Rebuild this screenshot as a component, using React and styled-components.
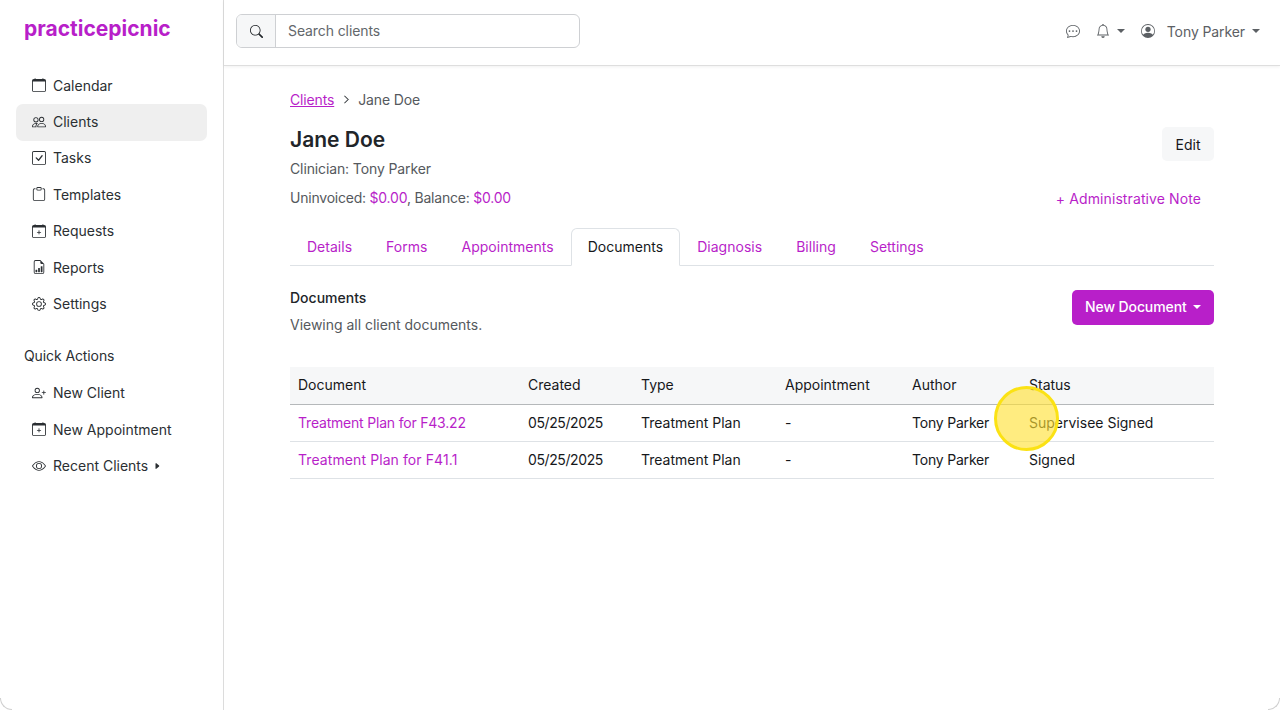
import React from "react";
import styled, { createGlobalStyle } from "styled-components";
import {
  BsCalendar, BsPeople, BsCheckSquare, BsClipboard, BsCalendarPlus,
  BsFileEarmarkBarGraph, BsGear, BsPersonPlus, BsEye, BsChatDots,
  BsBell, BsPersonCircle, BsSearch, BsCaretRightFill, BsChevronRight,
} from "react-icons/bs";

const purple = "#b81fc9";

const Global = createGlobalStyle`
  html, body { margin: 0; height: 100%; background: #fff; }
  body {
    font-family: Inter, "Noto Sans", "Liberation Sans", sans-serif;
    font-size: 14px;
    color: #212529;
    overflow: hidden;
  }
`;

const Page = styled.div`
  display: flex;
  width: 1280px;
  height: 710px;
`;

const Sidebar = styled.aside`
  flex: 0 0 224px;
  box-sizing: border-box;
  border-right: 1px solid #dcdcdc;
  padding: 0 16px;
`;

const Logo = styled.div`
  font-size: 21px;
  font-weight: 700;
  color: ${purple};
  height: 68px;
  line-height: 57px;
  padding-left: 8px;
`;

const NavList = styled.nav`
  display: flex;
  flex-direction: column;
`;

const NavItem = styled.a`
  display: flex;
  align-items: center;
  gap: 7px;
  box-sizing: border-box;
  height: 36.4px;
  padding: 0 0 2px 16px;
  border-radius: 7px;
  color: #2b2f33;
  background: ${(p) => (p.$active ? "#efefef" : "transparent")};
  svg { font-size: 14px; flex: none; }
`;

const SectionLabel = styled.div`
  padding: 23px 0 10px 8px;
  line-height: 20px;
  color: #2b2f33;
  letter-spacing: -0.1px;
`;

const Caret = styled(BsCaretRightFill)`
  && { font-size: 8px; margin-left: -2px; }
`;

const Main = styled.div`
  flex: 1;
  display: flex;
  flex-direction: column;
  min-width: 0;
`;

const Topbar = styled.header`
  flex: 0 0 66px;
  box-sizing: border-box;
  display: flex;
  align-items: center;
  justify-content: space-between;
  padding: 0 20px 3px 12px;
  border-bottom: 1px solid #dedede;
  box-shadow: 0 1px 3px rgba(0, 0, 0, 0.06);
`;

const Search = styled.div`
  display: flex;
  width: 344px;
  height: 34px;
  box-sizing: border-box;
  border: 1px solid #ced0d3;
  border-radius: 6px;
  overflow: hidden;
`;

const SearchIcon = styled.div`
  flex: 0 0 38px;
  display: flex;
  align-items: center;
  justify-content: center;
  background: #f6f7f8;
  border-right: 1px solid #ced0d3;
  color: #212529;
  font-size: 13px;
`;

const SearchText = styled.div`
  padding-left: 12px;
  line-height: 32px;
  color: #63676b;
  letter-spacing: -0.1px;
`;

const TopActions = styled.div`
  display: flex;
  align-items: center;
  color: #5c6064;
`;

const TopIcon = styled.span`
  display: flex;
  font-size: 14px;
  margin-left: ${(p) => p.$gap || 0}px;
`;

const TopName = styled.span`
  margin-left: 12px;
  letter-spacing: -0.1px;
`;

const DownCaret = styled.span`
  width: 0;
  height: 0;
  margin-left: ${(p) => p.$gap || 6}px;
  border-top: 4px solid currentColor;
  border-left: 4px solid transparent;
  border-right: 4px solid transparent;
`;

const Content = styled.main`
  padding: 23px 66px 0;
`;

const Crumbs = styled.div`
  display: flex;
  align-items: center;
  height: 20px;
  color: #55595d;
  letter-spacing: -0.15px;
  svg { font-size: 9px; margin: 0 7.5px; color: #404448; stroke: #404448; stroke-width: 1px; }
`;

const CrumbLink = styled.a`
  color: ${purple};
  text-decoration: underline;
`;

const ClientHead = styled.div`
  display: flex;
  justify-content: space-between;
  margin-top: 15px;
`;

const ClientName = styled.h1`
  margin: 0;
  padding-top: 1px;
  font-size: 21px;
  font-weight: 600;
  line-height: 30px;
  color: #212529;
`;

const Meta = styled.div`
  margin-top: ${(p) => p.$top}px;
  line-height: 20px;
  color: #55595d;
  letter-spacing: ${(p) => p.$spacing}px;
`;

const Money = styled.span`
  color: ${purple};
`;

const HeadActions = styled.div`
  display: flex;
  flex-direction: column;
  align-items: flex-end;
`;

const EditButton = styled.button`
  width: 52px;
  height: 34px;
  margin-top: 3px;
  padding: 0;
  border: 0;
  border-radius: 5px;
  background: #f6f7f8;
  color: #16181b;
  font: inherit;
`;

const NoteLink = styled.a`
  margin: 28px 13px 0 0;
  line-height: 20px;
  color: ${purple};
  letter-spacing: 0.1px;
`;

const Tabs = styled.div`
  display: flex;
  margin-top: 19px;
  height: 37px;
  border-bottom: 1px solid #dee2e6;
`;

const Tab = styled.a`
  box-sizing: border-box;
  height: 38px;
  padding: 0 16px;
  line-height: 36px;
  border: 1px solid ${(p) => (p.$active ? "#dee2e6" : "transparent")};
  border-bottom-color: ${(p) => (p.$active ? "#fff" : "transparent")};
  border-radius: 6px 6px 0 0;
  color: ${(p) => (p.$active ? "#16181b" : purple)};
  letter-spacing: 0.02px;
`;

const DocsHead = styled.div`
  display: flex;
  justify-content: space-between;
  align-items: flex-start;
  margin-top: 24px;
`;

const DocsTitle = styled.div`
  margin-top: -2px;
  line-height: 20px;
  font-weight: 500;
  color: #212529;
`;

const DocsText = styled.div`
  margin-top: 7px;
  line-height: 20px;
  color: #55595d;
  letter-spacing: -0.02px;
`;

const NewButton = styled.button`
  display: flex;
  align-items: center;
  height: 35px;
  width: 142px;
  padding: 0 13px 2px;
  border: 0;
  border-radius: 5px;
  background: ${purple};
  color: #fff;
  font: inherit;
  font-weight: 500;
  letter-spacing: -0.1px;
  white-space: nowrap;
`;

const Table = styled.table`
  width: 100%;
  margin-top: 32px;
  border-collapse: collapse;
  table-layout: fixed;
`;

const HeadRow = styled.tr`
  background: #f6f7f8;
  border-bottom: 1px solid #b5b8ba;
`;

const Row = styled.tr`
  border-bottom: 1px solid #dee2e6;
`;

const Th = styled.th`
  height: 37px;
  box-sizing: border-box;
  padding: 0 8px 2px;
  text-align: left;
  font-weight: 400;
  color: #16181b;
`;

const Td = styled.td`
  height: 37px;
  box-sizing: border-box;
  padding: 0 8px;
  color: #16181b;
  letter-spacing: ${(p) => p.$spacing || 0}px;
  white-space: nowrap;
`;

const DocLink = styled.a`
  color: ${purple};
`;

const Highlight = styled.div`
  position: absolute;
  left: 994px;
  top: 386px;
  width: 65px;
  height: 65px;
  box-sizing: border-box;
  border-radius: 50%;
  border: 3px solid #fbe214;
  background: rgba(255, 225, 50, 0.62);
`;

const WindowCorner = styled.div`
  position: absolute;
  bottom: 0;
  ${(p) => p.$side}: 0;
  width: 12px;
  height: 12px;
  box-sizing: border-box;
  border-bottom: 1px solid #cfcfcf;
  border-${(p) => p.$side}: 1px solid #cfcfcf;
  border-bottom-${(p) => p.$side}-radius: 12px;
`;

const mainNav = [
  [BsCalendar, "Calendar"],
  [BsPeople, "Clients", true],
  [BsCheckSquare, "Tasks"],
  [BsClipboard, "Templates"],
  [BsCalendarPlus, "Requests"],
  [BsFileEarmarkBarGraph, "Reports"],
  [BsGear, "Settings"],
];

const tabs = ["Details", "Forms", "Appointments", "Documents", "Diagnosis", "Billing", "Settings"];
const colWidths = [230, 113, 144, 127, 117, 193];

const rows = [
  { name: "Treatment Plan for F43.22", status: "Supervisee Signed", spacing: -0.2 },
  { name: "Treatment Plan for F41.1", status: "Signed", spacing: 0.09 },
];

export default function App() {
  return (
    <>
      <Global />
      <Page>
        <Sidebar>
          <Logo>practicepicnic</Logo>
          <NavList>
            {mainNav.map(([Icon, label, active]) => (
              <NavItem key={label} $active={active}>
                <Icon /> {label}
              </NavItem>
            ))}
          </NavList>
          <SectionLabel>Quick Actions</SectionLabel>
          <NavList>
            <NavItem><BsPersonPlus /> New Client</NavItem>
            <NavItem><BsCalendarPlus /> New Appointment</NavItem>
            <NavItem><BsEye /> Recent Clients <Caret /></NavItem>
          </NavList>
        </Sidebar>
        <Main>
          <Topbar>
            <Search>
              <SearchIcon><BsSearch /></SearchIcon>
              <SearchText>Search clients</SearchText>
            </Search>
            <TopActions>
              <TopIcon><BsChatDots /></TopIcon>
              <TopIcon $gap={16}><BsBell /></TopIcon>
              <DownCaret $gap={7} />
              <TopIcon $gap={16}><BsPersonCircle /></TopIcon>
              <TopName>Tony Parker</TopName>
              <DownCaret $gap={7} />
            </TopActions>
          </Topbar>
          <Content>
            <Crumbs>
              <CrumbLink>Clients</CrumbLink>
              <BsChevronRight />
              Jane Doe
            </Crumbs>
            <ClientHead>
              <div>
                <ClientName>Jane Doe</ClientName>
                <Meta $top={4} $spacing={-0.12}>Clinician: Tony Parker</Meta>
                <Meta $top={9} $spacing={-0.22}>
                  Uninvoiced: <Money>$0.00</Money>, Balance: <Money>$0.00</Money>
                </Meta>
              </div>
              <HeadActions>
                <EditButton>Edit</EditButton>
                <NoteLink>+ Administrative Note</NoteLink>
              </HeadActions>
            </ClientHead>
            <Tabs>
              {tabs.map((t) => (
                <Tab key={t} $active={t === "Documents"}>{t}</Tab>
              ))}
            </Tabs>
            <DocsHead>
              <div>
                <DocsTitle>Documents</DocsTitle>
                <DocsText>Viewing all client documents.</DocsText>
              </div>
              <NewButton>New Document <DownCaret /></NewButton>
            </DocsHead>
            <Table>
              <colgroup>
                {colWidths.map((w, i) => <col key={i} width={w} />)}
              </colgroup>
              <thead>
                <HeadRow>
                  {["Document", "Created", "Type", "Appointment", "Author", "Status"].map((h) => (
                    <Th key={h}>{h}</Th>
                  ))}
                </HeadRow>
              </thead>
              <tbody>
                {rows.map((r) => (
                  <Row key={r.name}>
                    <Td $spacing={r.spacing}><DocLink>{r.name}</DocLink></Td>
                    <Td $spacing={-0.4}>05/25/2025</Td>
                    <Td>Treatment Plan</Td>
                    <Td>-</Td>
                    <Td $spacing={-0.2}>Tony Parker</Td>
                    <Td>{r.status}</Td>
                  </Row>
                ))}
              </tbody>
            </Table>
          </Content>
        </Main>
      </Page>
      <Highlight />
      <WindowCorner $side="left" />
      <WindowCorner $side="right" />
    </>
  );
}
